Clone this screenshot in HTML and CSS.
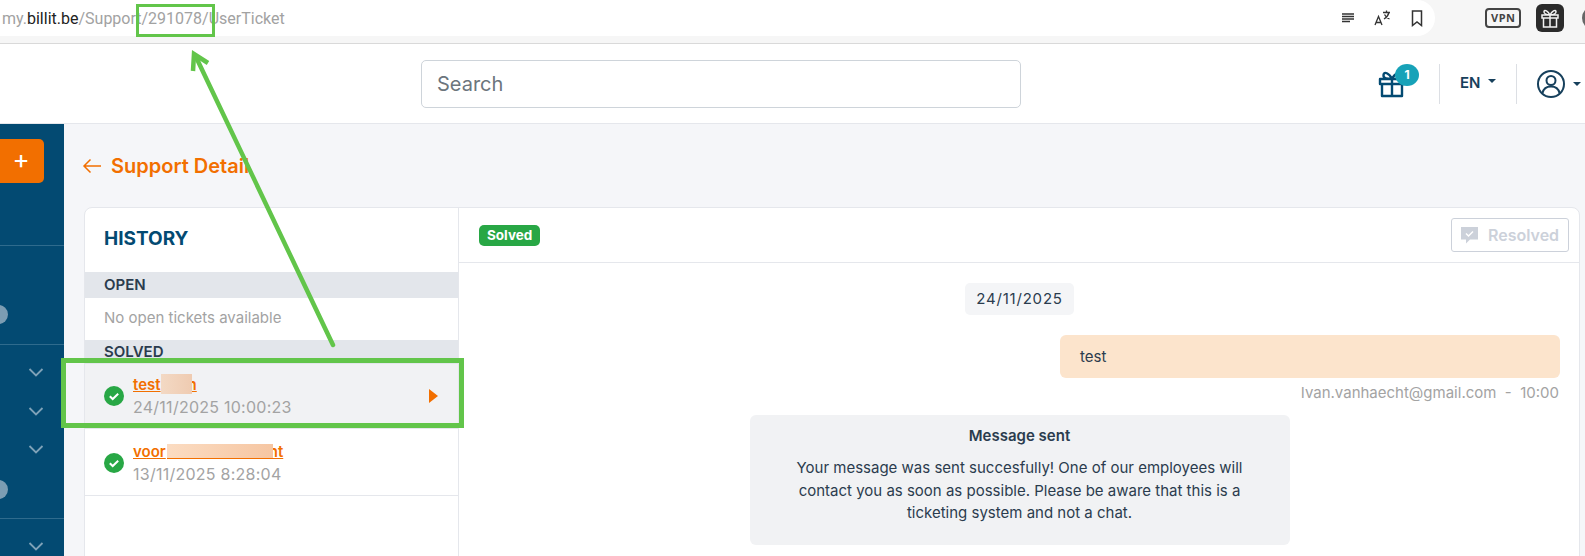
FILE: index.html
```html
<!DOCTYPE html>
<html lang="en">
<head>
    <meta charset="UTF-8">
    <title>Support Detail</title>
    <link rel="stylesheet" href="styles.css">
</head>
<body>
    <div class="browser-bar">
        <div class="omnibox">
            <div class="url"><span class="url-dim">my.</span><span class="url-host">billit.be</span><span class="url-dim">/Support/291078/UserTicket</span></div>
            <div class="omnibox-icons">
                <svg width="14" height="12" viewBox="0 0 14 12"><path d="M1 2h12M1 4.500h12M1 7h12M1 9.500h8" stroke="#333" stroke-width="1.300" fill="none"/></svg>
                <svg width="18" height="18" viewBox="0 0 18 18"><path d="M1 16 4.500 7.500 8 16M2.200 13.500h4.600M9 3.500h7M12.500 1.500v2M15 3.500c-.8 3-2.500 5-5 6.500M10.500 5.500c1 2 2.500 3.500 5 4.500" stroke="#333" stroke-width="1.300" fill="none"/></svg>
                <svg width="12" height="17" viewBox="0 0 12 17"><path d="M1.500 1h9v14.500L6 12l-4.500 3.500z" stroke="#333" stroke-width="1.500" fill="none"/></svg>
            </div>
        </div>
        <div class="browser-extras">
            <span class="vpn">VPN</span>
            <span class="gift-ext">
                <svg width="22" height="22" viewBox="0 0 22 22"><path d="M3 8h16v3H3zM4.500 11v9h13v-9M11 8v12M11 8C9 4 5.500 2 5 4.500S8 8 11 8c3 0 6.500-1 6-3.500S13 4 11 8" stroke="#f2f2f2" stroke-width="1.500" fill="none"/></svg>
            </span>
            <span class="avatar-ext"></span>
        </div>
    </div>

    <header class="topbar">
        <div class="search">Search</div>
        <div class="top-actions">
            <div class="gift">
                <svg width="28" height="30" viewBox="0 0 28 30"><path d="M2 11h24v5H2zM4 16v12h20V16M14 11v17M14 11C11 5 6 3 5.500 7S10 11 14 11c4 0 9-.5 8.500-4S17 5 14 11" stroke="#034a72" stroke-width="2.400" fill="none" stroke-linejoin="round"/></svg>
                <span class="gift-count">1</span>
            </div>
            <div class="lang">EN<span class="caret"></span></div>
            <div class="user">
                <svg width="30" height="30" viewBox="0 0 30 30"><circle cx="15" cy="15" r="13" stroke="#17405c" stroke-width="2" fill="none"/><circle cx="15" cy="11.500" r="4.500" stroke="#17405c" stroke-width="2" fill="none"/><path d="M6.500 24c1-4.500 4-6.500 8.500-6.500s7.500 2 8.500 6.500" stroke="#17405c" stroke-width="2" fill="none"/></svg>
                <span class="caret"></span>
            </div>
        </div>
    </header>

    <div class="layout">
        <nav class="sidebar">
            <div class="add-btn">+</div>
            <div class="nav-group nav-group-first"><span class="nav-dot"></span></div>
            <div class="nav-group nav-group-list">
                <svg class="chev" width="16" height="9" viewBox="0 0 16 9"><path d="M1.500 1 8 7.500 14.500 1"/></svg>
                <svg class="chev" width="16" height="9" viewBox="0 0 16 9"><path d="M1.500 1 8 7.500 14.500 1"/></svg>
                <svg class="chev" width="16" height="9" viewBox="0 0 16 9"><path d="M1.500 1 8 7.500 14.500 1"/></svg>
                <span class="nav-dot"></span>
            </div>
            <div class="nav-group nav-group-last">
                <svg class="chev" width="16" height="9" viewBox="0 0 16 9"><path d="M1.500 1 8 7.500 14.500 1"/></svg>
            </div>
        </nav>

        <main class="content">
            <h1 class="page-title">
                <svg width="20" height="16" viewBox="0 0 20 16"><path d="M19 8H2M8.500 1.500 2 8l6.500 6.500" stroke="#f26f00" stroke-width="1.500" fill="none"/></svg>
                Support Detail
            </h1>

            <div class="card">
                <aside class="history">
                    <h2 class="history-title">HISTORY</h2>
                    <div class="section-head">OPEN</div>
                    <div class="no-tickets">No open tickets available</div>
                    <div class="section-head section-solved">SOLVED</div>

                    <div class="ticket ticket-active">
                        <svg class="ticket-check" width="20" height="20" viewBox="0 0 20 20"><circle cx="10" cy="10" r="10" fill="#28a745"/><path d="M5.800 10.200 8.700 13l5.500-5.300" stroke="#fff" stroke-width="2" fill="none"/></svg>
                        <div class="ticket-text">
                            <div class="ticket-name">test<span class="redact redact-a"></span>n</div>
                            <div class="ticket-date">24/11/2025 10:00:23</div>
                        </div>
                        <span class="ticket-arrow"></span>
                    </div>
                    <div class="ticket">
                        <svg class="ticket-check" width="20" height="20" viewBox="0 0 20 20"><circle cx="10" cy="10" r="10" fill="#28a745"/><path d="M5.800 10.200 8.700 13l5.500-5.300" stroke="#fff" stroke-width="2" fill="none"/></svg>
                        <div class="ticket-text">
                            <div class="ticket-name">voor<span class="redact redact-b"></span>nt</div>
                            <div class="ticket-date">13/11/2025 8:28:04</div>
                        </div>
                    </div>
                </aside>

                <section class="thread">
                    <div class="thread-head">
                        <span class="badge-solved">Solved</span>
                        <div class="btn-resolved">
                            <svg width="17" height="17" viewBox="0 0 17 17"><path d="M0 0h17v12.500H9l-4 4v-4H0z" fill="#ccd1da"/><path d="M5 6.500 7.500 9l4.500-4.500" stroke="#fff" stroke-width="1.500" fill="none"/></svg>
                            Resolved
                        </div>
                    </div>
                    <div class="messages">
                        <div class="date-chip">24/11/2025</div>
                        <div class="bubble">test</div>
                        <div class="meta">Ivan.vanhaecht@gmail.com&nbsp; -&nbsp; 10:00</div>
                        <div class="notice">
                            <div class="notice-title">Message sent</div>
                            <p>Your message was sent succesfully! One of our employees will contact you as soon as possible. Please be aware that this is a ticketing system and not a chat.</p>
                        </div>
                    </div>
                </section>
            </div>
        </main>
    </div>

    <!-- green annotations drawn on top of the screenshot -->
    <div class="mark mark-url"></div>
    <div class="mark mark-row"></div>
    <svg class="mark-arrow" width="1585" height="556" viewBox="0 0 1585 556">
        <path d="M333 345 196 57" stroke="#62c54a" stroke-width="4.500" stroke-linecap="round" fill="none"/>
        <path d="M193 71 194 54 208 63" stroke="#62c54a" stroke-width="4.500" fill="none"/>
    </svg>
</body>
</html>
```

FILE: styles.css
```css
html, body {
    margin: 0;
    padding: 0;
    height: 556px;
    overflow: hidden;
}
body {
    font-family: Inter, "Liberation Sans", sans-serif;
    background: #fff;
    color: #2b3c4e;
    position: relative;
}

/* Browser bar */
.browser-bar {
    display: flex;
    height: 43px;
    background: #f6f6f6;
    border-bottom: 1px solid #d9d9d9;
}
.omnibox {
    flex: none;
    width: 1435px;
    height: 36px;
    background: #fff;
    border-radius: 0 18px 18px 0;
    display: flex;
    align-items: center;
    justify-content: space-between;
    padding: 0 12px 0 2px;
    box-sizing: border-box;
}
.url {
    font-family: "Roboto", "Liberation Sans", sans-serif;
    font-size: 16px;
}
.url-dim { color: #a2a2a2; }
.url-host { color: #222; }
.omnibox-icons {
    display: flex;
    align-items: center;
    gap: 19px;
}
.browser-extras {
    flex: none;
    display: flex;
    align-items: center;
    height: 36px;
    padding-left: 50px;
    gap: 15px;
}
.vpn {
    border: 2px solid #444;
    border-radius: 4px;
    font: bold 11px "Noto Sans", sans-serif;
    letter-spacing: 0.5px;
    padding: 1px 4px;
    color: #444;
    line-height: 14px;
}
.gift-ext {
    width: 28px;
    height: 28px;
    background: #2b2b2b;
    border-radius: 6px;
    display: flex;
    align-items: center;
    justify-content: center;
}
.avatar-ext {
    width: 24px;
    height: 24px;
    margin-left: 3px;
    border-radius: 50%;
    background: #666;
}

/* Top bar */
.topbar {
    height: 79px;
    background: #fff;
    border-bottom: 1px solid #e5e7ec;
    display: flex;
    align-items: center;
    padding-left: 421px;
}
.search {
    width: 600px;
    height: 48px;
    box-sizing: border-box;
    border: 1px solid #ced4da;
    border-radius: 5px;
    padding: 0 15px;
    font-size: 20px;
    line-height: 46px;
    color: #6c757d;
}
.top-actions {
    display: flex;
    align-items: center;
    margin-left: 357px;
}
.gift {
    position: relative;
    height: 40px;
    width: 61px;
    padding-top: 4px;
    box-sizing: border-box;
}
.gift-count {
    position: absolute;
    left: 17px;
    top: 0;
    width: 24px;
    height: 22px;
    border-radius: 50%;
    background: #17a2b8;
    color: #fff;
    font-size: 12px;
    font-weight: 700;
    line-height: 22px;
    text-align: center;
}
.lang {
    width: 78px;
    height: 40px;
    box-sizing: border-box;
    border-left: 1px solid #dcdfe4;
    border-right: 1px solid #dcdfe4;
    font-size: 15px;
    font-weight: 600;
    line-height: 38px;
    color: #17405c;
    padding-left: 20px;
    white-space: nowrap;
}
.caret {
    display: inline-block;
    vertical-align: 3px;
    margin-left: 8px;
    border-top: 4px solid #17405c;
    border-left: 4px solid transparent;
    border-right: 4px solid transparent;
}
.lang .caret {
    vertical-align: 5px;
}
.user {
    display: flex;
    align-items: center;
    padding-left: 19px;
}
.user .caret {
    margin-left: 7px;
}

.layout {
    display: flex;
    height: 432px;
}

/* Sidebar */
.sidebar {
    width: 64px;
    flex: none;
    background: #034a72;
    padding-top: 15px;
    box-sizing: border-box;
}
.add-btn {
    width: 42px;
    height: 44px;
    padding-right: 2px;
    background: #f26f00;
    border-radius: 0 5px 5px 0;
    color: #fff;
    font-size: 26px;
    line-height: 40px;
    text-align: center;
}
.nav-group {
    border-top: 1px solid #2f6b8d;
    position: relative;
}
.nav-group-first {
    margin-top: 62px;
    height: 98px;
}
.nav-group-list {
    height: 174px;
    padding-top: 23px;
    box-sizing: border-box;
}
.nav-group-last {
    padding-top: 23px;
}
.chev {
    display: block;
    margin: 0 0 29.500px 28px;
    fill: none;
    stroke: #7fa2b8;
    stroke-width: 1.800;
}
.nav-dot {
    position: absolute;
    left: -11px;
    width: 19px;
    height: 19px;
    border-radius: 50%;
    background: #7c9db3;
}
.nav-group-first .nav-dot { top: 59px; }
.nav-group-list .nav-dot { top: 135px; }

/* Main */
.content {
    flex: 1;
    background: #f5f6f9;
    padding: 0 5px 0 20px;
    min-width: 0;
}
.page-title {
    margin: 0;
    height: 83px;
    display: flex;
    align-items: center;
    gap: 9px;
    font-size: 20px;
    font-weight: 600;
    color: #f26f00;
}
.page-title svg {
    margin-left: -2px;
}
.card {
    display: flex;
    height: 360px;
    background: #fff;
    border: 1px solid #e5e7ec;
    border-radius: 8px;
    overflow: hidden;
}
.history {
    width: 373px;
    flex: none;
    border-right: 1px solid #e5e7ec;
}
.history-title {
    margin: 0;
    height: 64px;
    padding: 19px 0 0 19px;
    box-sizing: border-box;
    font-size: 19px;
    font-weight: 700;
    line-height: 24px;
    color: #034a72;
}
.section-head {
    background: #e3e6eb;
    height: 26px;
    padding-left: 19px;
    font-size: 15px;
    font-weight: 600;
    line-height: 26px;
    color: #2b3c4e;
}
.section-solved {
    height: 24px;
    line-height: 24px;
}
.no-tickets {
    height: 42px;
    padding-left: 19px;
    font-size: 15px;
    line-height: 40px;
    color: #a3a3a3;
}
.ticket {
    height: 65px;
    box-sizing: border-box;
    display: flex;
    align-items: center;
    padding: 0 20px 0 19px;
    border-bottom: 1px solid #e5e7ec;
}
.ticket-active {
    background: #f1f2f4;
    margin-bottom: 2px;
}
.ticket-check {
    flex: none;
    margin-right: 9px;
}
.ticket-text {
    flex: 1;
}
.ticket-name {
    font-size: 15px;
    font-weight: 600;
    line-height: 22px;
    color: #f26f00;
    text-decoration: underline;
}
.ticket-date {
    font-size: 16px;
    line-height: 23px;
    color: #a3a3a3;
    letter-spacing: 0.25px;
}
/* blurred patches sit over the end of the title */
.redact {
    display: inline-block;
    vertical-align: top;
    position: relative;
}
.redact-a {
    width: 31px;
    height: 20px;
    margin-right: -4px;
    background: linear-gradient(90deg, #f3d9c4, #efcbb1);
}
.redact-b {
    width: 106px;
    height: 14px;
    margin: 3px -4px 0 1px;
    border-bottom: 1px solid #f26f00;
    background: linear-gradient(90deg, #fbdcc2, #f6c6a2);
}
.ticket-arrow {
    border-left: 9px solid #f26f00;
    border-top: 7px solid transparent;
    border-bottom: 7px solid transparent;
}

/* Thread */
.thread {
    flex: 1;
    min-width: 0;
}
.thread-head {
    height: 55px;
    box-sizing: border-box;
    border-bottom: 1px solid #e5e7ec;
    display: flex;
    align-items: center;
    justify-content: space-between;
    padding: 0 10px 0 20px;
}
.badge-solved {
    background: #28a745;
    color: #fff;
    border-radius: 5px;
    font-size: 13.500px;
    font-weight: 700;
    line-height: 21px;
    padding: 0 8px;
}
.btn-resolved {
    display: flex;
    align-items: center;
    gap: 10px;
    height: 34px;
    width: 118px;
    box-sizing: border-box;
    padding-left: 9px;
    border: 1px solid #ccd1da;
    border-radius: 3px;
    font-size: 16px;
    font-weight: 600;
    color: #ccd1da;
}
.messages {
    display: flex;
    flex-direction: column;
    align-items: center;
    padding: 20px 19px 0 20px;
}
.date-chip {
    background: #f4f5f7;
    border-radius: 5px;
    height: 32px;
    line-height: 32px;
    padding: 0 11px;
    font-size: 15px;
    letter-spacing: 0.8px;
}
.bubble {
    align-self: flex-end;
    width: 500px;
    height: 43px;
    box-sizing: border-box;
    margin-top: 20px;
    padding-left: 20px;
    background: #fce4cc;
    border-radius: 6px;
    font-size: 15px;
    line-height: 43px;
}
.meta {
    align-self: flex-end;
    margin: 2px 0 0;
    padding-right: 1px;
    font-size: 15px;
    line-height: 26px;
    color: #a3a3a3;
}
.notice {
    width: 540px;
    box-sizing: border-box;
    margin-top: 9px;
    height: 130px;
    background: #f1f2f4;
    border-radius: 6px;
    padding: 10px 44px;
    text-align: center;
    font-size: 15px;
}
.notice-title {
    font-weight: 600;
    line-height: 22px;
}
.notice p {
    margin: 10px 0 0;
    line-height: 22.500px;
}

/* Annotations */
.mark {
    position: absolute;
    border: 3px solid #62c54a;
    box-sizing: border-box;
}
.mark-url {
    left: 136px;
    top: 4px;
    width: 79px;
    height: 33px;
}
.mark-row {
    left: 61px;
    top: 358px;
    width: 403px;
    height: 70px;
    border-width: 5px;
}
.mark-arrow {
    position: absolute;
    left: 0;
    top: 0;
    pointer-events: none;
}
```
